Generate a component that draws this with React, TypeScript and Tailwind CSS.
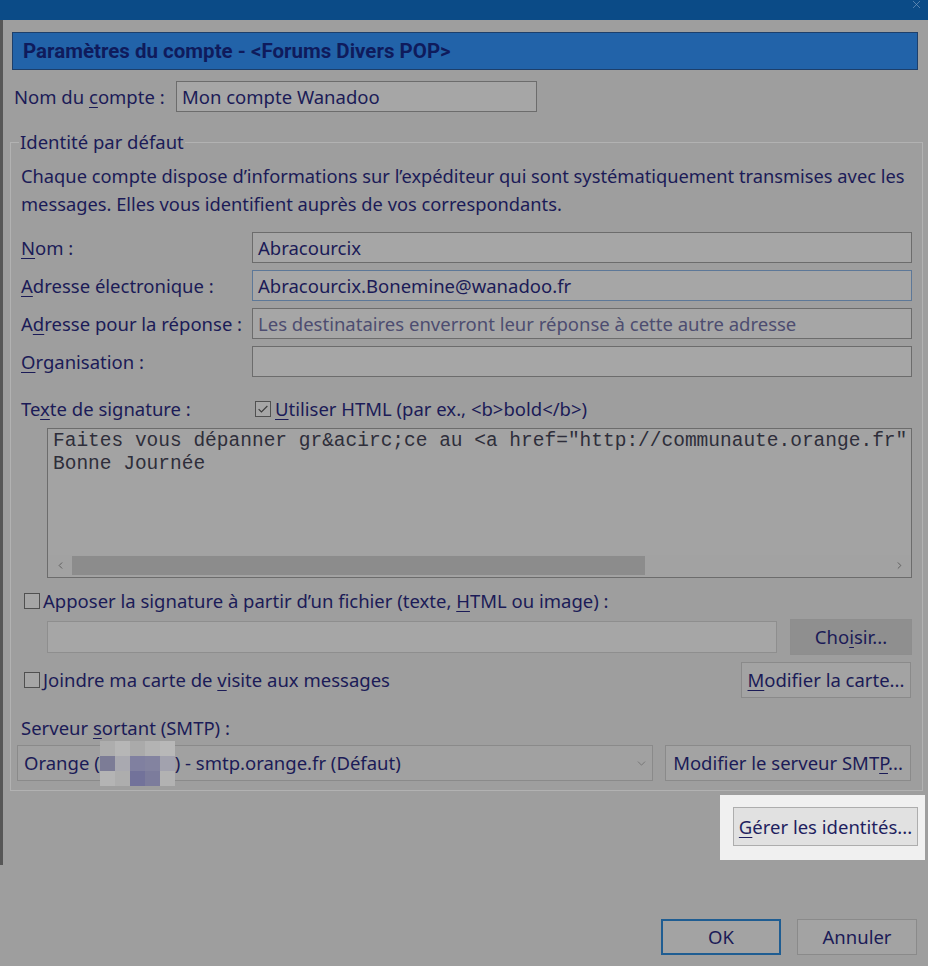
import type { ReactNode } from "react";
import { X, ChevronDown, ChevronLeft, ChevronRight } from "lucide-react";
import clsx from "clsx";

// access-key letter, underlined like a native dialog label
function Key({ children }: { children: string }) {
  return <span className="underline decoration-1 underline-offset-[3px]">{children}</span>;
}

function TextBox({
  value,
  placeholder,
  focused,
  className,
}: {
  value?: string;
  placeholder?: string;
  focused?: boolean;
  className?: string;
}) {
  return (
    <div
      className={clsx(
        "flex h-[31px] min-w-0 items-center overflow-hidden border bg-[#a6a6a6] px-[5px] whitespace-nowrap",
        focused ? "border-[#5d7898]" : "border-[#6c6c6c]",
        className,
      )}
    >
      {value ? <span>{value}</span> : null}
      {placeholder ? <span className="text-[#4d4d70]">{placeholder}</span> : null}
    </div>
  );
}

function Button({ children, className }: { children: ReactNode; className?: string }) {
  return (
    <div
      className={clsx(
        "flex h-[36px] shrink-0 items-center justify-center border whitespace-nowrap",
        className ?? "border-[#8a8a8a] bg-[#a3a3a3]",
      )}
    >
      {children}
    </div>
  );
}

function CheckBox({ checked }: { checked?: boolean }) {
  return (
    <span className="inline-flex h-[16px] w-[16px] shrink-0 items-center justify-center border border-[#505050] bg-[#a6a6a6]">
      {checked ? (
        <svg viewBox="0 0 16 16" className="h-[14px] w-[14px]">
          <path d="M3 8.2l3.2 3.2L13 4.6" fill="none" stroke="#3b3b3b" strokeWidth="1.3" />
        </svg>
      ) : null}
    </span>
  );
}

// pixelated patch hiding the account login
const mosaic = [
  "bg-[#adadad]", "bg-[#b6b6b6]", "bg-[#aaaaaa]", "bg-[#b3b3b3]", "bg-[#b8b8b8]",
  "bg-[#7c7c96]", "bg-[#a9a9b0]", "bg-[#8080a0]", "bg-[#8383a0]", "bg-[#a2a2ae]",
  "bg-[#b4b4b4]", "bg-[#adadad]", "bg-[#72729a]", "bg-[#7c7c9c]", "bg-[#b2b2b2]",
];

export default function App() {
  return (
    <div className="h-[966px] w-[928px] overflow-hidden bg-[#9e9e9e] font-['Segoe_UI','Noto_Sans',sans-serif] text-[18.5px] leading-[22px] text-[#1b1b57]">
      {/* window title bar */}
      <div className="flex h-[20px] items-start justify-end bg-[#0b4b87] pr-[5px]">
        <X size={13} strokeWidth={1.2} className="-mt-[2px] text-[#7d9dc2]" />
      </div>

      <div className="h-[845px] border-l-[3px] border-[#575757] pt-[12px]">
        {/* page header */}
        <div className="ml-[9px] flex h-[38px] w-[906px] items-center border border-[#1d3f6b] bg-[#2263a9] pl-[10px]">
          <span className="font-['Roboto',sans-serif] text-[20.5px] font-bold text-[#0f1b5c]">
            Paramètres du compte - &lt;Forums Divers POP&gt;
          </span>
        </div>

        <div className="mt-[11px] flex items-center pl-[11px]">
          <span className="w-[162px]">
            Nom du <Key>c</Key>ompte :
          </span>
          <TextBox className="w-[361px]" value="Mon compte Wanadoo" />
        </div>

        <fieldset className="ml-[7px] mt-[20px] w-[913px] min-w-0 border border-[#b2b2b2] pb-[9px] pl-[10px] pr-[10px]">
          <legend className="-ml-[2px] px-[1px] leading-[20px]">Identité par défaut</legend>

          <p className="mt-[10px] whitespace-nowrap text-[18.3px] leading-[28px]">
            Chaque compte dispose d’informations sur l’expéditeur qui sont systématiquement transmises avec les
            <br />
            messages. Elles vous identifient auprès de vos correspondants.
          </p>

          <div className="mt-[14px] flex flex-col gap-[7px]">
            <div className="flex items-center">
              <span className="w-[231px] shrink-0">
                <Key>N</Key>om :
              </span>
              <TextBox className="flex-1" value="Abracourcix" />
            </div>
            <div className="flex items-center">
              <span className="w-[231px] shrink-0">
                <Key>A</Key>dresse électronique :
              </span>
              <TextBox className="flex-1" value="Abracourcix.Bonemine@wanadoo.fr" focused />
            </div>
            <div className="flex items-center">
              <span className="w-[231px] shrink-0 whitespace-nowrap">
                A<Key>d</Key>resse pour la réponse :
              </span>
              <TextBox className="flex-1" placeholder="Les destinataires enverront leur réponse à cette autre adresse" />
            </div>
            <div className="flex items-center">
              <span className="w-[231px] shrink-0">
                <Key>O</Key>rganisation :
              </span>
              <TextBox className="flex-1" />
            </div>
          </div>

          <div className="mt-[21px] flex h-[22px] items-center">
            <span className="w-[234px] shrink-0">
              Te<Key>x</Key>te de signature :
            </span>
            <CheckBox checked />
            <span className="ml-[4px]">
              <Key>U</Key>tiliser HTML (par ex., &lt;b&gt;bold&lt;/b&gt;)
            </span>
          </div>

          {/* signature editor */}
          <div className="ml-[26px] mt-[8px] flex h-[150px] min-w-0 flex-col border border-[#6c6c6c] bg-[#a3a3a3]">
            <div className="min-w-0 flex-1 overflow-hidden whitespace-pre pl-[5px] pt-[1px] font-['Liberation_Mono','Courier_New',monospace] text-[19.5px] leading-[23px] text-[#2e2e3a]">
              {'Faites vous dépanner gr&acirc;ce au <a href="http://communaute.orange.fr" target="_blank">'}
              {"\n"}
              {"Bonne Journée"}
            </div>
            <div className="mb-[1px] flex h-[21px] items-center bg-[#a2a2a2] text-[#5a5a5a]">
              <span className="flex w-[24px] justify-center">
                <ChevronLeft size={11} strokeWidth={2} />
              </span>
              <div className="h-[19px] w-[573px] bg-[#8c8c8c]" />
              <span className="flex-1" />
              <span className="flex w-[24px] justify-center">
                <ChevronRight size={11} strokeWidth={2} />
              </span>
            </div>
          </div>

          <div className="ml-[3px] mt-[12px] flex h-[22px] items-center">
            <CheckBox />
            <span className="ml-[3px] whitespace-nowrap">
              Apposer la signature à partir d’un fichier (texte, <Key>H</Key>TML ou image) :
            </span>
          </div>

          <div className="ml-[26px] mt-[7px] flex items-center">
            <TextBox className="h-[32px] w-[730px] shrink-0 border-[#8e8e8e]" />
            <Button className="ml-[13px] w-[122px] border-[#8e8e8e] bg-[#8f8f8f]">
              <span>
                Cho<Key>i</Key>sir...
              </span>
            </Button>
          </div>

          <div className="mt-[7px] flex items-center justify-between pr-[1px]">
            <div className="ml-[3px] flex items-center whitespace-nowrap">
              <CheckBox />
              <span className="ml-[3px]">
                Joindre ma carte de <Key>v</Key>isite aux messages
              </span>
            </div>
            <Button className="w-[170px] border-[#8a8a8a] bg-[#a3a3a3]">
              <span>
                <Key>M</Key>odifier la carte...
              </span>
            </Button>
          </div>

          <div className="mt-[19px]">
            Serveur <Key>s</Key>ortant (SMTP) :
          </div>

          <div className="mt-[6px] flex items-center">
            <div className="-ml-[4px] flex h-[36px] w-[636px] shrink-0 items-center border border-[#8a8a8a] bg-[#a1a1a1] pl-[6px] pr-[4px] whitespace-nowrap">
              <span>Orange (</span>
              <span className="-my-[5px] grid h-[45px] w-[75px] grid-cols-5">
                {mosaic.map((c, i) => (
                  <span key={i} className={c} />
                ))}
              </span>
              <span>) - smtp.orange.fr (Défaut)</span>
              <span className="flex-1" />
              <ChevronDown size={13} strokeWidth={1.5} className="text-[#6e6e6e]" />
            </div>
            <Button className="ml-[12px] w-[246px] border-[#8a8a8a] bg-[#a3a3a3]">
              <span>
                Modifier le serveur SMT<Key>P</Key>...
              </span>
            </Button>
          </div>
        </fieldset>

        {/* spotlighted control */}
        <div className="ml-[717px] mt-[4px] h-[65px] w-[205px] bg-[#f0f0f0] pl-[13px] pt-[12px]">
          <div className="flex h-[39px] w-[185px] items-center justify-center border border-[#adadad] bg-[#e1e1e1] text-[#1f1f5f]">
            <span>
              <Key>G</Key>érer les identités...
            </span>
          </div>
        </div>
      </div>

      <div className="mt-[54px] flex justify-end gap-[16px] pr-[11px]">
        <Button className="w-[120px] border-2 border-[#1f5d92] bg-[#a3a3a3]">OK</Button>
        <Button className="w-[120px] border-[#8a8a8a] bg-[#a3a3a3]">Annuler</Button>
      </div>
    </div>
  );
}
